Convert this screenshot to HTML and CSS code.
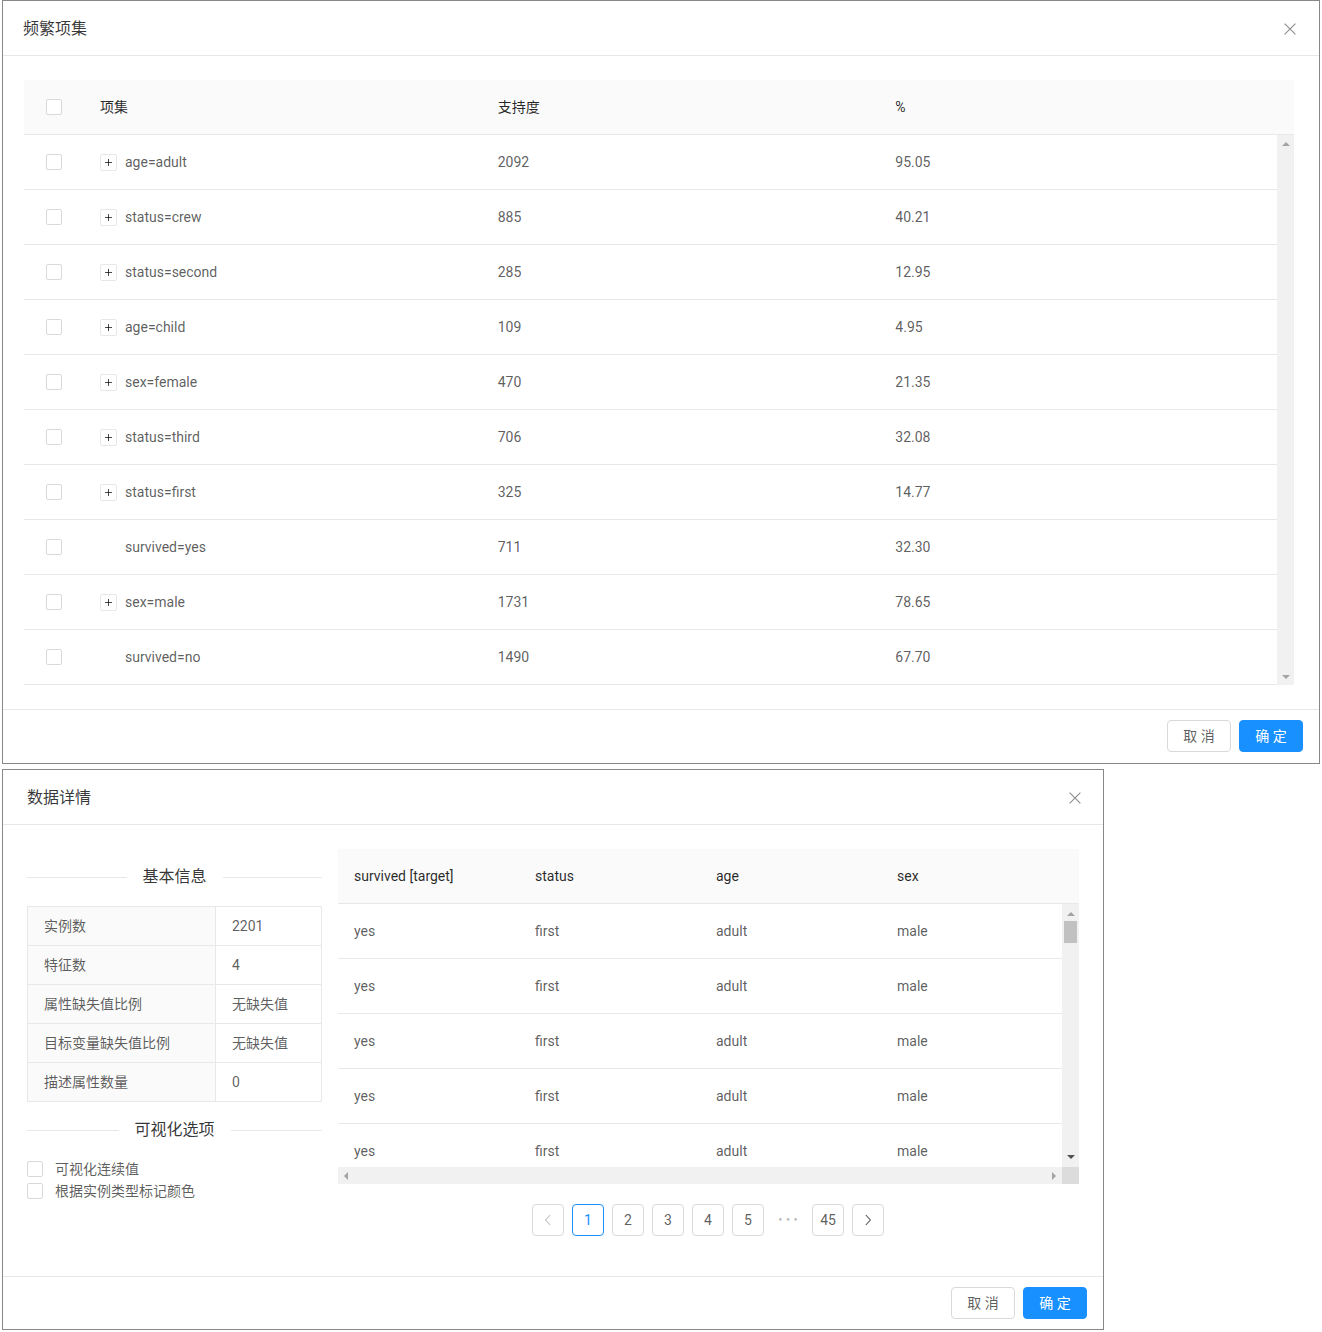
FILE: index.html
```html
<!DOCTYPE html>
<html lang="zh-CN">
<head>
<meta charset="utf-8">
<title>频繁项集 / 数据详情</title>
<link rel="stylesheet" href="styles.css">
</head>
<body>
<div class="page">
  <section class="modal modal-fi">
    <header class="modal-header hdr-fi">
      <div class="modal-title">频繁项集</div>
      <span class="modal-close"><svg width="12" height="12" viewBox="0 0 12 12"><path d="M0.6 0.6L11.4 11.4M11.4 0.6L0.6 11.4" stroke="#8c8c8c" stroke-width="1.1" fill="none"/></svg></span>
    </header>
    <div class="modal-body body-fi">
      <div class="fi-table">
        <div class="fi-head">
          <div class="sel"><span class="cb"></span></div>
          <div class="cell">项集</div>
          <div class="cell">支持度</div>
          <div class="cell">%</div>
          <div></div>
        </div>
        <div class="fi-scroll">
          <div class="fi-rows">
            <div class="fi-row"><div class="sel"><span class="cb"></span></div><div class="cell item"><span class="exp"></span>age=adult</div><div class="cell">2092</div><div class="cell">95.05</div></div>
            <div class="fi-row"><div class="sel"><span class="cb"></span></div><div class="cell item"><span class="exp"></span>status=crew</div><div class="cell">885</div><div class="cell">40.21</div></div>
            <div class="fi-row"><div class="sel"><span class="cb"></span></div><div class="cell item"><span class="exp"></span>status=second</div><div class="cell">285</div><div class="cell">12.95</div></div>
            <div class="fi-row"><div class="sel"><span class="cb"></span></div><div class="cell item"><span class="exp"></span>age=child</div><div class="cell">109</div><div class="cell">4.95</div></div>
            <div class="fi-row"><div class="sel"><span class="cb"></span></div><div class="cell item"><span class="exp"></span>sex=female</div><div class="cell">470</div><div class="cell">21.35</div></div>
            <div class="fi-row"><div class="sel"><span class="cb"></span></div><div class="cell item"><span class="exp"></span>status=third</div><div class="cell">706</div><div class="cell">32.08</div></div>
            <div class="fi-row"><div class="sel"><span class="cb"></span></div><div class="cell item"><span class="exp"></span>status=first</div><div class="cell">325</div><div class="cell">14.77</div></div>
            <div class="fi-row"><div class="sel"><span class="cb"></span></div><div class="cell item"><span class="exp none"></span>survived=yes</div><div class="cell">711</div><div class="cell">32.30</div></div>
            <div class="fi-row"><div class="sel"><span class="cb"></span></div><div class="cell item"><span class="exp"></span>sex=male</div><div class="cell">1731</div><div class="cell">78.65</div></div>
            <div class="fi-row"><div class="sel"><span class="cb"></span></div><div class="cell item"><span class="exp none"></span>survived=no</div><div class="cell">1490</div><div class="cell">67.70</div></div>
          </div>
          <div class="vscroll vs-fi"><span class="arr-up"></span><span class="arr-down"></span></div>
        </div>
      </div>
    </div>
    <footer class="modal-footer ft-fi">
      <span class="btn">取 消</span>
      <span class="btn btn-primary">确 定</span>
    </footer>
  </section>

  <section class="modal modal-dd">
    <header class="modal-header hdr-dd">
      <div class="modal-title">数据详情</div>
      <span class="modal-close"><svg width="12" height="12" viewBox="0 0 12 12"><path d="M0.6 0.6L11.4 11.4M11.4 0.6L0.6 11.4" stroke="#8c8c8c" stroke-width="1.1" fill="none"/></svg></span>
    </header>
    <div class="modal-body body-dd">
      <div class="dd-left">
        <div class="divider div-first"><span>基本信息</span></div>
        <table class="desc">
          <colgroup><col class="c1"><col></colgroup>
          <tr><td class="lbl">实例数</td><td>2201</td></tr>
          <tr><td class="lbl">特征数</td><td>4</td></tr>
          <tr><td class="lbl">属性缺失值比例</td><td>无缺失值</td></tr>
          <tr><td class="lbl">目标变量缺失值比例</td><td>无缺失值</td></tr>
          <tr><td class="lbl">描述属性数量</td><td>0</td></tr>
        </table>
        <div class="divider"><span>可视化选项</span></div>
        <div class="opts">
          <div class="opt"><span class="cb"></span>可视化连续值</div>
          <div class="opt"><span class="cb"></span>根据实例类型标记颜色</div>
        </div>
      </div>
      <div class="dd-right">
        <div class="dd-head">
          <div class="cell">survived [target]</div>
          <div class="cell">status</div>
          <div class="cell">age</div>
          <div class="cell">sex</div>
          <div></div>
        </div>
        <div class="dd-scroll">
          <div class="dd-rows">
            <div class="dd-row"><div class="cell">yes</div><div class="cell">first</div><div class="cell">adult</div><div class="cell">male</div></div>
            <div class="dd-row"><div class="cell">yes</div><div class="cell">first</div><div class="cell">adult</div><div class="cell">male</div></div>
            <div class="dd-row"><div class="cell">yes</div><div class="cell">first</div><div class="cell">adult</div><div class="cell">male</div></div>
            <div class="dd-row"><div class="cell">yes</div><div class="cell">first</div><div class="cell">adult</div><div class="cell">male</div></div>
            <div class="dd-row"><div class="cell">yes</div><div class="cell">first</div><div class="cell">adult</div><div class="cell">male</div></div>
          </div>
          <div class="vscroll vs-dd"><span class="arr-up"></span><span class="thumb"></span><span class="spacer"></span><span class="arr-down dark"></span></div>
        </div>
        <div class="hscroll">
          <div class="htrack"><span class="arr-left"></span><span class="arr-right"></span></div>
          <div class="corner"></div>
        </div>
        <div class="pager">
          <span class="pg disabled"><svg width="8" height="12" viewBox="0 0 8 12"><path d="M6.2 1L1.6 6l4.6 5" fill="none" stroke="currentColor" stroke-width="1.1"/></svg></span>
          <span class="pg active">1</span>
          <span class="pg">2</span>
          <span class="pg">3</span>
          <span class="pg">4</span>
          <span class="pg">5</span>
          <span class="pg ellipsis">•••</span>
          <span class="pg">45</span>
          <span class="pg"><svg width="8" height="12" viewBox="0 0 8 12"><path d="M1.8 1L6.4 6l-4.6 5" fill="none" stroke="currentColor" stroke-width="1.1"/></svg></span>
        </div>
      </div>
    </div>
    <footer class="modal-footer">
      <span class="btn">取 消</span>
      <span class="btn btn-primary">确 定</span>
    </footer>
  </section>
</div>
</body>
</html>
```

FILE: styles.css
```css
* { box-sizing: border-box; }
html, body { margin: 0; padding: 0; background: #fff; }
body {
  font-family: Roboto, "Noto Sans CJK SC", sans-serif;
  font-size: 14px;
  line-height: 22px;
  color: rgba(0, 0, 0, 0.65);
}
.page { padding-left: 2px; }

.modal {
  border: 1px solid #888;
  background: #fff;
  display: flex;
  flex-direction: column;
}
.modal-fi { width: 1318px; }
.modal-dd { width: 1102px; margin-top: 5px; }

.modal-header {
  height: 55px;
  border-bottom: 1px solid #e8e8e8;
  display: flex;
  align-items: center;
  justify-content: space-between;
}
.hdr-fi { padding: 1px 23px 0 20px; }
.hdr-dd { padding: 1px 22px 0 24px; }
.modal-title {
  font-size: 16px;
  line-height: 22px;
  color: rgba(0, 0, 0, 0.8);
}
.modal-close { display: flex; width: 12px; height: 12px; }

.modal-footer {
  border-top: 1px solid #e8e8e8;
  padding: 10px 16px;
  display: flex;
  justify-content: flex-end;
  gap: 8px;
}
.ft-fi { padding-bottom: 11px; }
.btn {
  width: 64px;
  height: 32px;
  border: 1px solid #d9d9d9;
  border-radius: 4px;
  background: #fff;
  color: rgba(0, 0, 0, 0.65);
  display: flex;
  align-items: center;
  justify-content: center;
  font-size: 14px;
}
.btn-primary { background: #1890ff; border-color: #1890ff; color: #fff; }

.cb {
  display: block;
  width: 16px;
  height: 16px;
  border: 1px solid #d9d9d9;
  border-radius: 2px;
  background: #fff;
  flex: none;
}
.cell { padding: 0 16px; white-space: nowrap; overflow: hidden; }
.sel { display: flex; justify-content: center; }

/* frequent itemsets */
.body-fi { padding: 24px 25px 24px 21px; }
.fi-head {
  display: grid;
  grid-template-columns: 60px 1fr 1fr 1fr 17px;
  height: 55px;
  background: #fafafa;
  border-bottom: 1px solid #e8e8e8;
  align-items: center;
  color: rgba(0, 0, 0, 0.85);
}
.fi-scroll { display: flex; }
.fi-rows { flex: 1; }
.fi-row {
  display: grid;
  grid-template-columns: 60px 1fr 1fr 1fr;
  height: 55px;
  border-bottom: 1px solid #e8e8e8;
  align-items: center;
}
.item { display: flex; align-items: center; }
.exp {
  width: 17px;
  height: 17px;
  border: 1px solid #e8e8e8;
  border-radius: 2px;
  background: #fff;
  margin-right: 8px;
  position: relative;
  flex: none;
}
.exp::before {
  content: "";
  position: absolute;
  left: 4px;
  top: 7px;
  width: 7px;
  height: 1px;
  background: rgba(0, 0, 0, 0.7);
}
.exp::after {
  content: "";
  position: absolute;
  left: 7px;
  top: 4px;
  width: 1px;
  height: 7px;
  background: rgba(0, 0, 0, 0.7);
}
.exp.none { border-color: transparent; background: transparent; }
.exp.none::before, .exp.none::after { display: none; }

.vscroll {
  width: 17px;
  flex: none;
  background: #f1f1f1;
  display: flex;
  flex-direction: column;
  align-items: center;
}
.vs-fi { justify-content: space-between; padding: 7px 0 6px; }
.arr-up {
  width: 0; height: 0;
  border-left: 4px solid transparent;
  border-right: 4px solid transparent;
  border-bottom: 4px solid #a3a3a3;
}
.arr-down {
  width: 0; height: 0;
  border-left: 4px solid transparent;
  border-right: 4px solid transparent;
  border-top: 4px solid #a3a3a3;
}
.arr-down.dark { border-top-color: #505050; }
.arr-left {
  width: 0; height: 0;
  border-top: 4px solid transparent;
  border-bottom: 4px solid transparent;
  border-right: 4px solid #a3a3a3;
}
.arr-right {
  width: 0; height: 0;
  border-top: 4px solid transparent;
  border-bottom: 4px solid transparent;
  border-left: 4px solid #a3a3a3;
}

/* data details */
.body-dd { padding: 24px; display: flex; gap: 16px; }
.dd-left { width: 295px; flex: none; }
.dd-right { flex: 1; min-width: 0; }

.divider {
  display: flex;
  align-items: center;
  margin: 16px 0;
  font-size: 16px;
  line-height: 24px;
  color: rgba(0, 0, 0, 0.8);
  white-space: nowrap;
}
.divider::before, .divider::after {
  content: "";
  flex: 1;
  border-top: 1px solid #e8e8e8;
}
.divider span { padding: 0 16px; }
.div-first { margin-top: 16px; margin-bottom: 17px; }

.desc {
  width: 100%;
  border-collapse: collapse;
  table-layout: fixed;
}
.desc col.c1 { width: 188px; }
.desc td {
  border: 1px solid #e8e8e8;
  padding: 8px 16px;
  line-height: 22px;
  height: 38px;
  white-space: nowrap;
}
.desc td.lbl { background: #fafafa; }

.opts { margin-top: 3px; }
.opt { display: flex; align-items: center; height: 22px; line-height: 22px; }
.opt .cb { margin-right: 12px; }

.dd-head {
  display: grid;
  grid-template-columns: repeat(4, 1fr) 17px;
  height: 55px;
  background: #fafafa;
  border-bottom: 1px solid #e8e8e8;
  align-items: center;
  color: rgba(0, 0, 0, 0.85);
}
.dd-scroll { display: flex; height: 263px; }
.dd-rows { flex: 1; overflow: hidden; }
.dd-row {
  display: grid;
  grid-template-columns: repeat(4, 1fr);
  height: 55px;
  flex: none;
  border-bottom: 1px solid #e8e8e8;
  align-items: center;
}
.vs-dd { padding: 8px 0 8px; }
.vs-dd .thumb {
  display: block;
  width: 13px;
  height: 22px;
  margin-top: 5px;
  background: #c1c1c1;
}
.vs-dd .spacer { flex: 1; }
.hscroll { display: flex; height: 17px; }
.htrack {
  flex: 1;
  background: #f1f1f1;
  display: flex;
  align-items: center;
  justify-content: space-between;
  padding: 0 6px;
}
.corner { width: 17px; background: #dcdcdc; }

.pager {
  display: flex;
  justify-content: center;
  gap: 8px;
  margin: 20px 1px 16px 0;
}
.pg {
  width: 32px;
  height: 32px;
  border: 1px solid #d9d9d9;
  border-radius: 4px;
  display: flex;
  align-items: center;
  justify-content: center;
  color: rgba(0, 0, 0, 0.65);
  font-size: 14px;
}
.pg.active { border-color: #1890ff; color: #1890ff; }
.pg.disabled { color: rgba(0, 0, 0, 0.25); }
.pg.ellipsis {
  border-color: transparent;
  color: rgba(0, 0, 0, 0.25);
  letter-spacing: 3px;
  font-size: 14px;
  padding-left: 3px;
}
```
